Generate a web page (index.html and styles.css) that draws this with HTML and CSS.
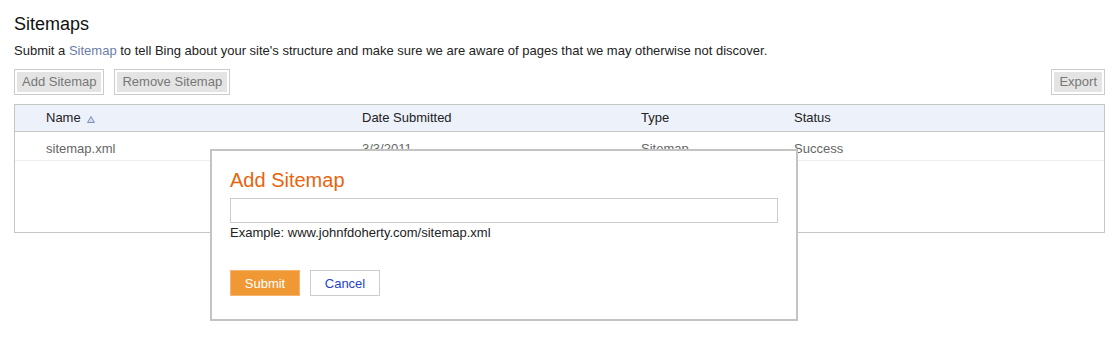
FILE: index.html
```html
<!DOCTYPE html>
<html lang="en">
<head>
    <meta charset="UTF-8">
    <title>Sitemaps</title>
    <link rel="stylesheet" href="styles.css">
</head>
<body>
<div class="page">
    <h1>Sitemaps</h1>
    <p class="intro">Submit a <a href="#">Sitemap</a> to tell Bing about your site's structure and make sure we are aware of pages that we may otherwise not discover.</p>

    <div class="toolbar">
        <div class="toolbar-left">
            <button class="tool-btn"><span>Add Sitemap</span></button>
            <button class="tool-btn"><span>Remove Sitemap</span></button>
        </div>
        <button class="tool-btn"><span>Export</span></button>
    </div>

    <div class="grid">
        <div class="grid-row grid-head">
            <div>Name
                <svg class="sort" width="8" height="7" viewBox="0 0 8 7">
                    <polygon points="4,0.5 7.5,6.5 0.5,6.5" fill="#d3dbee" stroke="#7d8fbd" stroke-width="1"></polygon>
                </svg>
            </div>
            <div>Date Submitted</div>
            <div>Type</div>
            <div>Status</div>
        </div>
        <div class="grid-row grid-item">
            <div>sitemap.xml</div>
            <div>3/3/2011</div>
            <div>Sitemap</div>
            <div>Success</div>
        </div>
    </div>
</div>

<!-- popup over the list -->
<div class="dialog">
    <h2>Add Sitemap</h2>
    <input type="text" class="dialog-input">
    <div class="hint">Example: www.johnfdoherty.com/sitemap.xml</div>
    <div class="dialog-actions">
        <button class="btn-submit">Submit</button>
        <button class="btn-cancel">Cancel</button>
    </div>
</div>
</body>
</html>
```

FILE: styles.css
```css
* {
    box-sizing: border-box;
    margin: 0;
    padding: 0;
}

body {
    font-family: "Liberation Sans", Arial, sans-serif;
    font-size: 13px;
    color: #222222;
    background: #ffffff;
    position: relative;
    width: 1119px;
    height: 353px;
    overflow: hidden;
}

.page {
    padding: 13px 14px 0 14px;
}

h1 {
    font-size: 18px;
    line-height: 22px;
    font-weight: normal;
    color: #111111;
}

.intro {
    margin-top: 8px;
    line-height: 16px;
}

.intro a {
    color: #6b7ea8;
    text-decoration: none;
}

.toolbar {
    margin-top: 10px;
    display: flex;
    justify-content: space-between;
}

.toolbar-left {
    display: flex;
    gap: 10px;
}

.tool-btn {
    font-family: inherit;
    font-size: 13px;
    border: 1px solid #cccccc;
    background: #ffffff;
    padding: 2px;
    cursor: pointer;
}

.tool-btn span {
    display: block;
    background: #e4e4e4;
    color: #777777;
    line-height: 20px;
    padding: 0 5px 0 5px;
}

.grid {
    margin-top: 9px;
    border: 1px solid #c6c6c6;
    height: 129px;
}

.grid-row {
    display: grid;
    grid-template-columns: 316px 279px 153px 1fr;
    padding-left: 31px;
}

.grid-head {
    background: #edf1fa;
    border-bottom: 1px solid #c6c6c6;
    line-height: 26px;
    color: #222222;
}

.sort {
    margin-left: 3px;
    vertical-align: -1px;
}

.grid-item {
    color: #666666;
    line-height: 20px;
    padding-top: 7px;
    padding-bottom: 1px;
    border-bottom: 1px solid #eeeeee;
}

.dialog {
    position: absolute;
    left: 210px;
    top: 149px;
    width: 588px;
    height: 172px;
    background: #ffffff;
    border: 2px solid #c3c3c3;
    padding: 17px 17px 0 18px;
    z-index: 10;
}

.dialog h2 {
    font-size: 20px;
    line-height: 24px;
    font-weight: normal;
    color: #e8640e;
}

.dialog-input {
    display: block;
    margin-top: 6px;
    width: 548px;
    height: 25px;
    border: 1px solid #cccccc;
    font-family: inherit;
    font-size: 13px;
    padding: 0 4px;
}

.hint {
    margin-top: 2px;
    line-height: 16px;
    color: #222222;
}

.dialog-actions {
    margin-top: 29px;
    display: flex;
    gap: 10px;
}

.dialog-actions button {
    font-family: inherit;
    font-size: 13px;
    width: 70px;
    height: 26px;
    cursor: pointer;
}

.btn-submit {
    background: #ef9834;
    border: 1px solid #f6b46e;
    color: #ffffff;
}

.btn-cancel {
    background: #ffffff;
    border: 1px solid #cccccc;
    color: #1f43c9;
}
```
